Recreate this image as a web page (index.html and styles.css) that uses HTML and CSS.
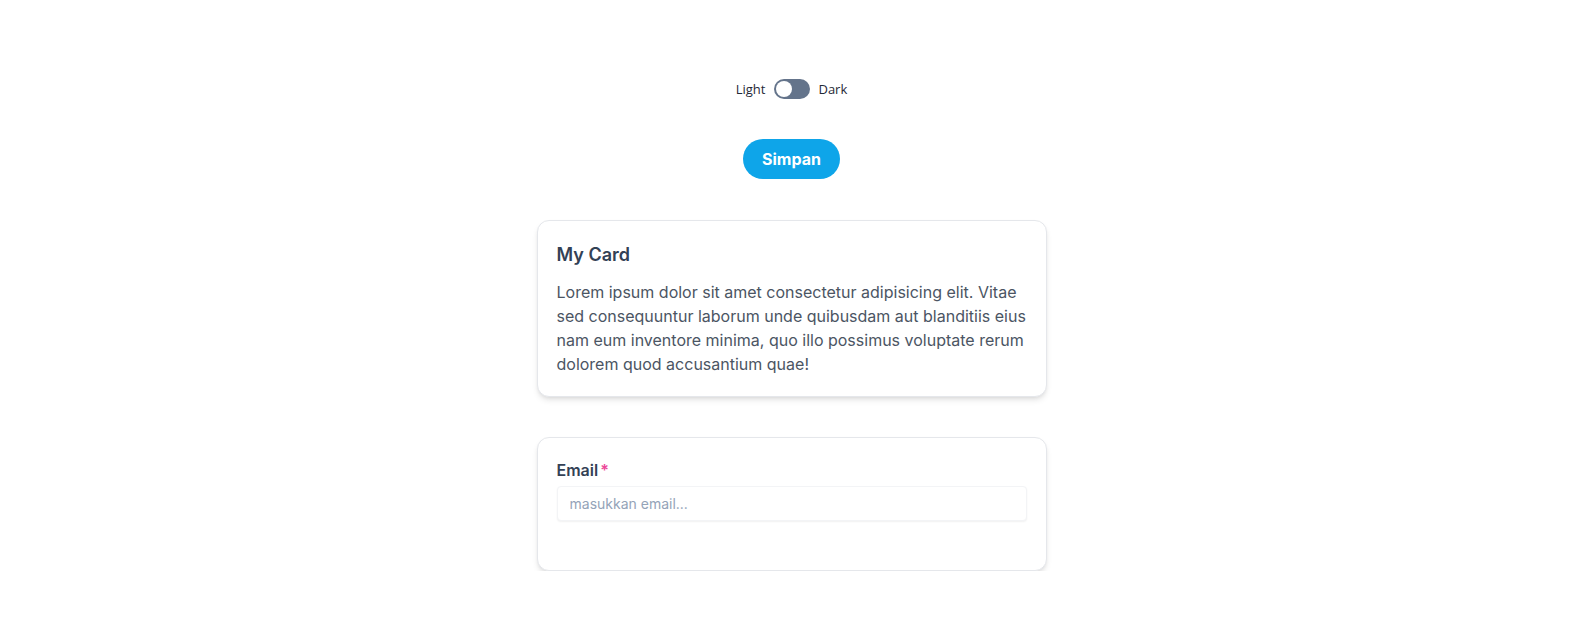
FILE: index.html
```html
<!DOCTYPE html>
<html lang="id">
<head>
<meta charset="utf-8">
<title>Card</title>
<link rel="stylesheet" href="styles.css">
</head>
<body>
<main class="page">
  <div class="theme-toggle">
    <span class="toggle-label">Light</span>
    <span class="switch"><span class="knob"></span></span>
    <span class="toggle-label">Dark</span>
  </div>
  <button class="btn-primary" type="button">Simpan</button>
  <section class="card">
    <h2 class="card-title">My Card</h2>
    <p class="card-text">Lorem ipsum dolor sit amet consectetur adipisicing elit. Vitae sed consequuntur laborum unde quibusdam aut blanditiis eius nam eum inventore minima, quo illo possimus voluptate rerum dolorem quod accusantium quae!</p>
  </section>
  <section class="card card-form">
    <label class="field-label" for="email">Email<span class="req">*</span></label>
    <input class="field-input" id="email" type="email" placeholder="masukkan email...">
  </section>
</main>
</body>
</html>
```
FILE: styles.css
```css
* { box-sizing: border-box; }
html, body { margin: 0; padding: 0; background: #ffffff; }
body { font-family: Inter, "Noto Sans", sans-serif; color: #334155; }

.page {
  display: flex;
  flex-direction: column;
  align-items: center;
  padding-top: 79px;
  padding-left: 8px;
}

.theme-toggle {
  display: flex;
  align-items: center;
  height: 20px;
}
.toggle-label {
  font-family: "Open Sans", "Noto Sans", sans-serif;
  font-size: 13px;
  color: #1f2937;
}
.switch {
  position: relative;
  width: 36px;
  height: 20px;
  margin: 0 8px 0 9px;
  border-radius: 10px;
  background: #64748b;
}
.knob {
  position: absolute;
  left: 2px;
  top: 2px;
  width: 16px;
  height: 16px;
  border-radius: 50%;
  background: #ffffff;
}

.btn-primary {
  margin-top: 40px;
  width: 97px;
  height: 40px;
  border: 0;
  border-radius: 20px;
  background: #0ea5e9;
  color: #ffffff;
  font-family: Inter, sans-serif;
  font-size: 16px;
  font-weight: 700;
  cursor: pointer;
}

.card {
  margin-top: 41px;
  width: 510px;
  padding: 20px 19px;
  background: #ffffff;
  border: 1px solid #e5e7eb;
  border-radius: 12px;
  box-shadow: 0 4px 6px -1px rgba(0,0,0,0.1), 0 2px 4px -2px rgba(0,0,0,0.1);
}
.card-title {
  margin: 0 0 11px;
  font-size: 18px;
  line-height: 28px;
  font-weight: 600;
  color: #334155;
}
.card-text {
  margin: 0;
  font-size: 16px;
  line-height: 24px;
  color: #4b5563;
}

.card-form {
  display: flex;
  flex-direction: column;
  margin-top: 40px;
  padding-bottom: 49px;
}
.field-label {
  font-size: 16px;
  line-height: 24px;
  font-weight: 600;
  color: #334155;
}
.req { color: #ec4899; margin-left: 2px; }
.field-input {
  margin-top: 4px;
  height: 35px;
  padding: 0 12px;
  border: 1px solid #f3f4f6;
  border-radius: 4px;
  box-shadow: 0 1px 2px rgba(0,0,0,0.06);
  font-family: Inter, sans-serif;
  font-size: 14px;
  color: #334155;
  outline: none;
}
.field-input::placeholder { color: #94a3b8; }
```
